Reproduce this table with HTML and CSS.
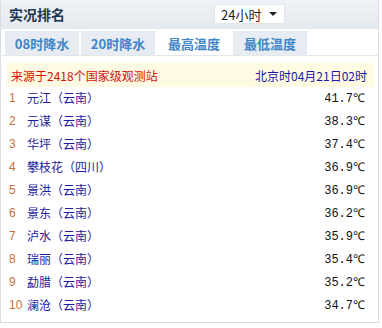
FILE: index.html
```html
<!DOCTYPE html>
<html lang="zh">
<head>
<meta charset="utf-8">
<link rel="stylesheet" href="styles.css">
</head>
<body>
<div class="box">
  <div class="head">
    <span class="title">实况排名</span>
    <div class="select"><span>24小时</span><span class="arrow"></span></div>
  </div>
  <div class="tabs">
    <div class="tab">08时降水</div>
    <div class="tab">20时降水</div>
    <div class="tab active">最高温度</div>
    <div class="tab">最低温度</div>
  </div>
  <div class="info">
    <span class="src">来源于2418个国家级观测站</span>
    <span class="time">北京时04月21日02时</span>
  </div>
  <ol class="list">
    <li><span class="no">1</span><span class="name">元江（云南）</span><span class="val">41.7℃</span></li>
    <li><span class="no">2</span><span class="name">元谋（云南）</span><span class="val">38.3℃</span></li>
    <li><span class="no">3</span><span class="name">华坪（云南）</span><span class="val">37.4℃</span></li>
    <li><span class="no">4</span><span class="name">攀枝花（四川）</span><span class="val">36.9℃</span></li>
    <li><span class="no">5</span><span class="name">景洪（云南）</span><span class="val">36.9℃</span></li>
    <li><span class="no">6</span><span class="name">景东（云南）</span><span class="val">36.2℃</span></li>
    <li><span class="no">7</span><span class="name">泸水（云南）</span><span class="val">35.9℃</span></li>
    <li><span class="no">8</span><span class="name">瑞丽（云南）</span><span class="val">35.4℃</span></li>
    <li><span class="no">9</span><span class="name">勐腊（云南）</span><span class="val">35.2℃</span></li>
    <li><span class="no">10</span><span class="name">澜沧（云南）</span><span class="val">34.7℃</span></li>
  </ol>
</div>
</body>
</html>
```
FILE: styles.css
```css
* { box-sizing: border-box; }
body {
  margin: 0;
  background: #fff;
  font-family: "Noto Sans CJK SC", "Liberation Sans", sans-serif;
  font-size: 12px;
}
.box {
  width: 379px;
  height: 323px;
  border: 1px solid #d9dee4;
  border-top: none;
}
.head {
  height: 29px;
  background: linear-gradient(#f0f3f7, #e3e9ef);
  display: flex;
  align-items: center;
  padding-left: 8px;
  border-bottom: 1px solid #e4e8ec;
}
.title {
  font-size: 14px;
  font-weight: bold;
  color: #1f3650;
  width: 205px;
}
.select {
  width: 71px;
  height: 20px;
  background: #fff;
  border: 1px solid #e2e6ea;
  display: flex;
  align-items: center;
  justify-content: space-between;
  padding: 0 7px 0 6px;
  font-size: 13px;
  color: #222;
}
.arrow {
  width: 0; height: 0;
  border-left: 4px solid transparent;
  border-right: 4px solid transparent;
  border-top: 4px solid #222;
}
.tabs {
  display: flex;
  gap: 2px;
  padding: 2px 4px 0 4px;
  height: 27px;
  border-bottom: 1px solid #e2e7ec;
}
.tab {
  width: 74px;
  height: 24px;
  background: #e6ecf2;
  color: #3f86c8;
  font-weight: bold;
  font-size: 13px;
  display: flex;
  align-items: center;
  justify-content: center;
}
.tab.active { background: #fff; }
.info {
  margin: 7px 4px 0 6px;
  height: 24px;
  background: #fffbe2;
  display: flex;
  align-items: center;
  justify-content: space-between;
  padding: 0 7px 0 4px;
  font-size: 12px;
}
.src { color: #d4120c; }
.time { color: #1a1aa6; }
.list {
  list-style: none;
  margin: 0;
  padding: 0 13px 0 0;
}
.list li {
  height: 23px;
  display: flex;
  align-items: center;
}
.list li:first-child { margin-top: -1px; }
.no {
  width: 26px;
  padding-left: 8px;
  color: #c4703c;
  font-family: "Liberation Sans", sans-serif;
  font-size: 12px;
}
.name { color: #1c1ca0; flex: 1; font-size: 12px; }
.val {
  color: #111;
  font-family: "Liberation Mono", "DejaVu Sans Mono", monospace;
  font-size: 12px;
}
```
